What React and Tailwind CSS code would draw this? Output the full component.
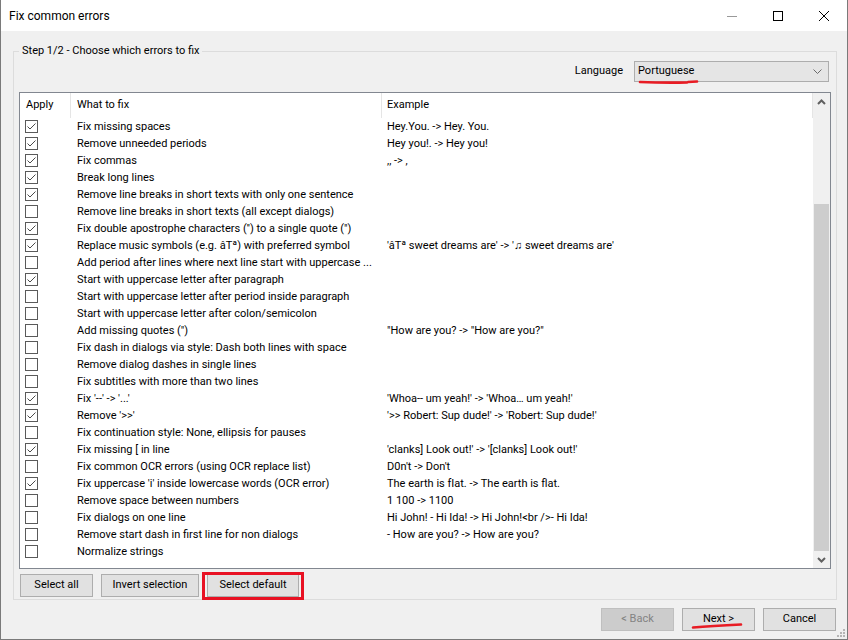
import React from 'react';

const rows = [
  [true, 'Fix missing spaces', 'Hey.You. -> Hey. You.'],
  [true, 'Remove unneeded periods', 'Hey you!. -> Hey you!'],
  [true, 'Fix commas', ',, -> ,'],
  [true, 'Break long lines', ''],
  [true, 'Remove line breaks in short texts with only one sentence', ''],
  [false, 'Remove line breaks in short texts (all except dialogs)', ''],
  [true, "Fix double apostrophe characters ('') to a single quote (\")", ''],
  [true, 'Replace music symbols (e.g. âTª) with preferred symbol', "'âTª sweet dreams are' -> '♫ sweet dreams are'"],
  [false, 'Add period after lines where next line start with uppercase ...', ''],
  [true, 'Start with uppercase letter after paragraph', ''],
  [false, 'Start with uppercase letter after period inside paragraph', ''],
  [false, 'Start with uppercase letter after colon/semicolon', ''],
  [false, 'Add missing quotes (")', '"How are you? -> "How are you?"'],
  [false, 'Fix dash in dialogs via style: Dash both lines with space', ''],
  [false, 'Remove dialog dashes in single lines', ''],
  [false, 'Fix subtitles with more than two lines', ''],
  [true, "Fix '--' -> '...'", "'Whoa-- um yeah!' -> 'Whoa… um yeah!'"],
  [true, "Remove '>>'", "'>> Robert: Sup dude!' -> 'Robert: Sup dude!'"],
  [false, 'Fix continuation style: None, ellipsis for pauses', ''],
  [true, 'Fix missing [ in line', "'clanks] Look out!' -> '[clanks] Look out!'"],
  [false, 'Fix common OCR errors (using OCR replace list)', "D0n't -> Don't"],
  [true, "Fix uppercase 'i' inside lowercase words (OCR error)", 'The earth is fIat. -> The earth is flat.'],
  [false, 'Remove space between numbers', '1 100 -> 1100'],
  [false, 'Fix dialogs on one line', 'Hi John! - Hi Ida! -> Hi John!<br />- Hi Ida!'],
  [false, 'Remove start dash in first line for non dialogs', '- How are you? -> How are you?'],
  [false, 'Normalize strings', ''],
];

const CheckBox = ({ checked }) => (
  <div className="mt-[2px] ml-[5px] h-[13px] w-[13px] shrink-0 border border-[#5a5a5a] bg-white">
    {checked && (
      <svg width="11" height="11" viewBox="0 0 11 11" className="block">
        <path d="M1.5 5.5 L4 8 L9.5 2.5" fill="none" stroke="#4a4a4a" strokeWidth="1" />
      </svg>
    )}
  </div>
);

const Button = ({ children, className = '', disabled }) => (
  <div
    className={`flex h-[23px] items-center justify-center border text-[11px] ${
      disabled ? 'border-[#bfbfbf] bg-[#cccccc] text-[#838383]' : 'border-[#adadad] bg-[#e1e1e1] text-black'
    } ${className}`}
  >
    {children}
  </div>
);

const Chevron = ({ up }) => (
  <svg width="9" height="6" viewBox="0 0 9 6">
    <path d={up ? 'M1 5 L4.5 1.5 L8 5' : 'M1 1 L4.5 4.5 L8 1'} fill="none" stroke="#606060" strokeWidth="2" />
  </svg>
);

export default function App() {
  return (
    <div className="relative flex h-[640px] w-[848px] flex-col border-x border-b border-[#7a7a7a] bg-[#f0f0f0] font-['Roboto',sans-serif] text-[11px] text-black">
      {/* title bar */}
      <div className="flex h-[31px] shrink-0 items-center bg-white">
        <span className="ml-[8px] text-[12px]">Fix common errors</span>
        <div className="ml-auto flex items-center">
          <div className="flex h-[31px] w-[46px] items-center justify-center">
            <svg width="10" height="10" viewBox="0 0 10 10"><path d="M0 5.5 H10" stroke="#999" strokeWidth="1" /></svg>
          </div>
          <div className="flex h-[31px] w-[46px] items-center justify-center">
            <svg width="10" height="10" viewBox="0 0 10 10"><rect x="0.5" y="0.5" width="9" height="9" fill="none" stroke="#000" strokeWidth="1" /></svg>
          </div>
          <div className="flex h-[31px] w-[46px] items-center justify-center">
            <svg width="10" height="10" viewBox="0 0 10 10"><path d="M0 0 L10 10 M10 0 L0 10" stroke="#000" strokeWidth="1" /></svg>
          </div>
        </div>
      </div>

      {/* group box */}
      <fieldset className="ml-[12px] mr-[10px] mt-[12px] border border-[#dcdcdc] px-[5px] pb-[2px]">
        <legend className="ml-[0px] px-[3px] leading-[16px]">Step 1/2 - Choose which errors to fix</legend>

        <div className="relative mt-[2px] flex items-center justify-end pr-[2px]">
          <span className="mr-[11px]">Language</span>
          <div className="flex h-[21px] w-[195px] items-center border border-[#adadad] bg-[#e5e5e5] pl-[3px] pr-[6px]">
            <span>Portuguese</span>
            <svg className="ml-auto" width="9" height="5" viewBox="0 0 9 5">
              <path d="M0.5 0.5 L4.5 4.5 L8.5 0.5" fill="none" stroke="#6a6a6a" strokeWidth="1" />
            </svg>
          </div>
          <svg className="absolute left-[619px] top-[18px]" width="64" height="6" viewBox="0 0 64 6">
            <path d="M2 3 Q25 4 49 3.5 M50 3 L59 2.5" fill="none" stroke="#e81c24" strokeWidth="2.6" strokeLinecap="round" />
          </svg>
        </div>

        {/* list */}
        <div className="mt-[10px] flex h-[477px] border border-[#828790] bg-white">
          <div className="flex-1">
            <div className="flex h-[25px] items-center">
              <div className="flex h-full w-[51px] items-center border-r border-[#e5e5e5] pl-[6px]">Apply</div>
              <div className="flex h-full w-[311px] items-center border-r border-[#e5e5e5] pl-[6px]">What to fix</div>
              <div className="flex h-full flex-1 items-center border-r border-[#e5e5e5] pl-[5px]">Example</div>
            </div>
            {rows.map(([checked, what, example]) => (
              <div key={what} className="flex h-[17px] items-start leading-[17px]">
                <div className="w-[51px]">
                  <CheckBox checked={checked} />
                </div>
                <div className="w-[311px] overflow-hidden whitespace-nowrap pl-[6px]">{what}</div>
                <div className="flex-1 overflow-hidden whitespace-nowrap pl-[5px]">{example}</div>
              </div>
            ))}
          </div>
          <div className="flex w-[17px] flex-col bg-[#f0f0f0]">
            <div className="flex h-[17px] items-center justify-center"><Chevron up /></div>
            <div className="h-[94px]" />
            <div className="mx-[1px] flex-1 bg-[#cdcdcd]" />
            <div className="flex h-[17px] items-center justify-center"><Chevron /></div>
          </div>
        </div>

        <div className="relative mt-[5px] flex gap-[8px] pl-[1px]">
          <Button className="w-[73px]">Select all</Button>
          <Button className="w-[98px]">Invert selection</Button>
          <Button className="w-[92px]">Select default</Button>
          <div className="absolute left-[183px] top-[-2px] h-[28px] w-[102px] border-[3px] border-[#e81123]" />
        </div>
      </fieldset>

      {/* bottom buttons */}
      <div className="relative mr-[11px] mt-[8px] flex justify-end gap-[8px]">
        <Button className="w-[73px]" disabled>&lt; Back</Button>
        <Button className="w-[73px]">Next &gt;</Button>
        <Button className="w-[73px]">Cancel</Button>
        <svg className="absolute left-[690px] top-[14px]" width="54" height="8" viewBox="0 0 54 8">
          <path d="M2 5.5 Q20 4 50 2.5" fill="none" stroke="#e81c24" strokeWidth="2.6" strokeLinecap="round" />
        </svg>
      </div>

      <svg className="absolute bottom-[2px] right-[2px]" width="8" height="8" viewBox="0 0 8 8">
        <rect x="6" y="0" width="2" height="2" fill="#b5b5b5" />
        <rect x="3" y="3" width="2" height="2" fill="#b5b5b5" />
        <rect x="6" y="3" width="2" height="2" fill="#b5b5b5" />
        <rect x="0" y="6" width="2" height="2" fill="#b5b5b5" />
        <rect x="3" y="6" width="2" height="2" fill="#b5b5b5" />
        <rect x="6" y="6" width="2" height="2" fill="#b5b5b5" />
      </svg>
    </div>
  );
}
